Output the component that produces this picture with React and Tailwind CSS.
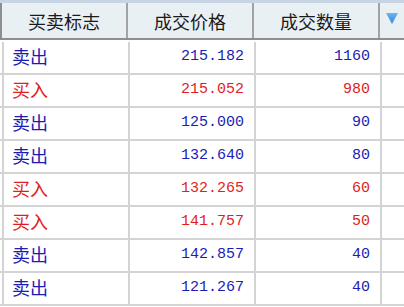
import React from "react";

const trades = [
  { side: "卖出", price: "215.182", qty: "1160" },
  { side: "买入", price: "215.052", qty: "980" },
  { side: "卖出", price: "125.000", qty: "90" },
  { side: "卖出", price: "132.640", qty: "80" },
  { side: "买入", price: "132.265", qty: "60" },
  { side: "买入", price: "141.757", qty: "50" },
  { side: "卖出", price: "142.857", qty: "40" },
  { side: "卖出", price: "121.267", qty: "40" },
];

const cjk = { fontFamily: '"Noto Sans CJK SC", "Noto Sans", sans-serif' };
const mono = { fontFamily: '"Liberation Mono", monospace' };

const App = () => {
  return (
    <div className="w-[404px] h-[307px] overflow-hidden bg-white" style={cjk}>
      <div className="h-[3px] bg-[#c6d4e4]" />
      <div className="flex h-[37px] bg-[#e9f0f4] border-b-2 border-[#8e8e8e] text-[18px] text-[#1a1a1a]">
        <div className="w-[2px] bg-[#8e8e8e]" />
        {["买卖标志", "成交价格", "成交数量"].map((h) => (
          <div
            key={h}
            className="w-[126px] flex items-center justify-center border-r-2 border-[#a2a2a2] leading-none"
          >
            {h}
          </div>
        ))}
        <div className="flex-1 flex items-start justify-center pt-[10px]">
          <svg width="12" height="11" viewBox="0 0 12 11">
            <defs>
              <linearGradient id="tri" x1="0" y1="0" x2="0" y2="1">
                <stop offset="0" stopColor="#6cb6ee" />
                <stop offset="1" stopColor="#2f8ad6" />
              </linearGradient>
            </defs>
            <path d="M0 0 H12 L6 11 Z" fill="url(#tri)" />
          </svg>
        </div>
      </div>
      <div className="mt-[2px]">
        {trades.map((t, i) => {
          const color = t.side === "买入" ? "text-[#e01e1e]" : "text-[#1c1cb4]";
          return (
            <div key={i} className={`flex h-[33px] border-b-2 border-[#d4d4d4] ${color}`}>
              <div className="ml-[2px] w-[2px] bg-[#d4d4d4]" />
              <div className="w-[126px] flex items-center pl-[8px] pb-[3px] border-r-2 border-[#d4d4d4] text-[18px] leading-none">
                {t.side}
              </div>
              <div
                className="w-[126px] flex items-center justify-end pr-[10px] pb-[2px] border-r-2 border-[#d4d4d4] text-[15px] leading-none"
                style={mono}
              >
                {t.price}
              </div>
              <div
                className="w-[126px] flex items-center justify-end pr-[10px] pb-[2px] border-r-2 border-[#d4d4d4] text-[15px] leading-none"
                style={mono}
              >
                {t.qty}
              </div>
              <div className="flex-1" />
            </div>
          );
        })}
      </div>
    </div>
  );
};

export default App;
